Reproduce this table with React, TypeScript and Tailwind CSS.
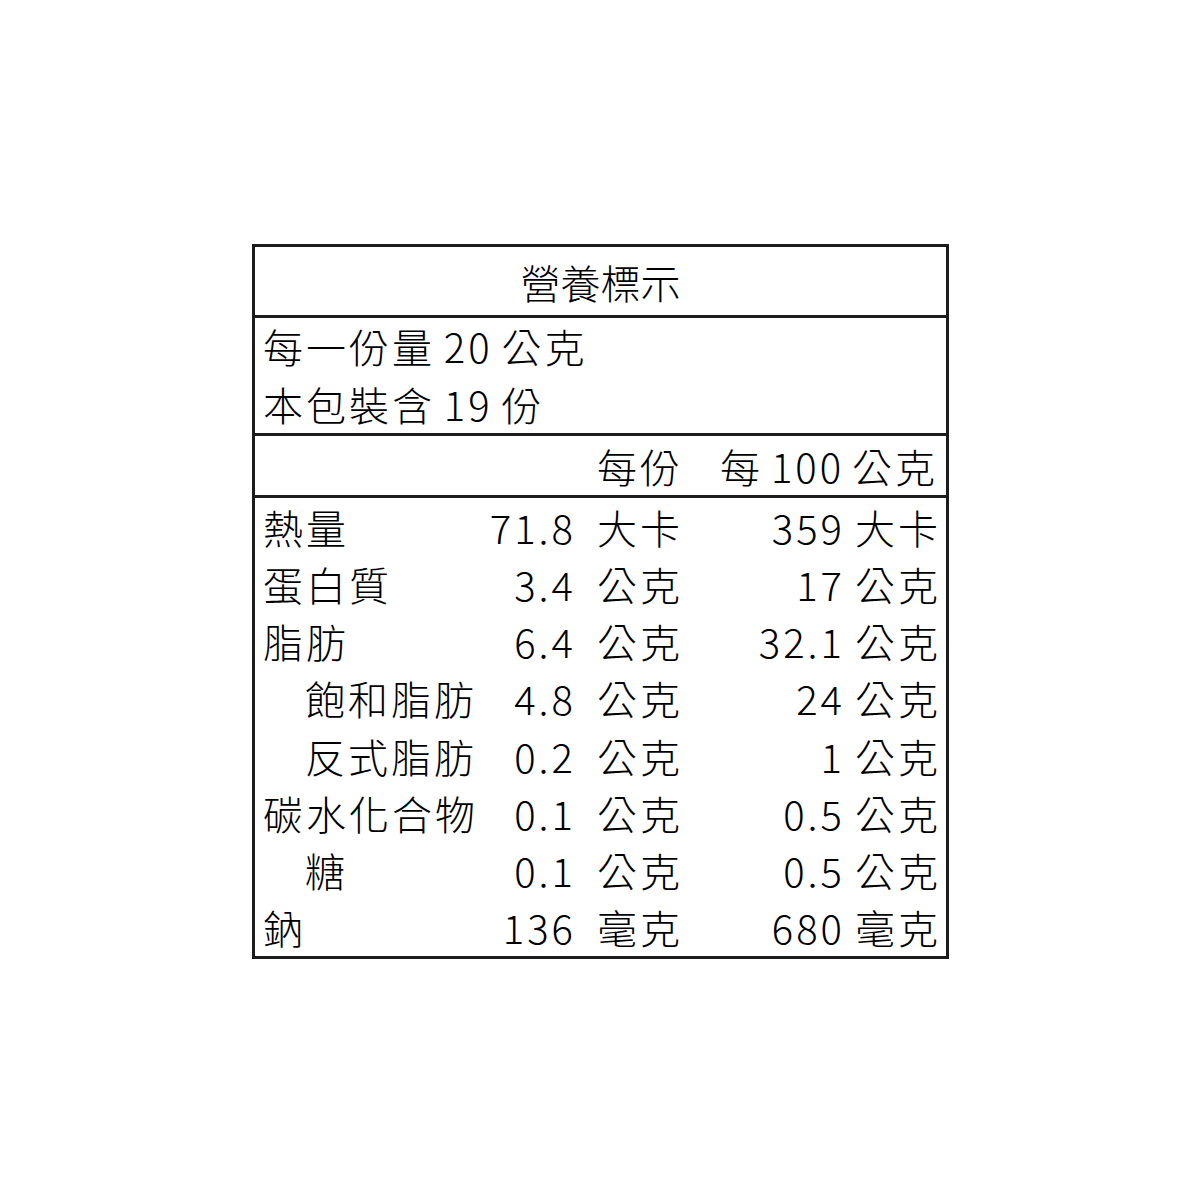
import React from "react";

// Nutrition facts rows
const rows = [
  { label: "熱量", v1: "71.8", u1: "大卡", v2: "359", u2: "大卡" },
  { label: "蛋白質", v1: "3.4", u1: "公克", v2: "17", u2: "公克" },
  { label: "脂肪", v1: "6.4", u1: "公克", v2: "32.1", u2: "公克" },
  { label: "飽和脂肪", v1: "4.8", u1: "公克", v2: "24", u2: "公克", sub: true },
  { label: "反式脂肪", v1: "0.2", u1: "公克", v2: "1", u2: "公克", sub: true },
  { label: "碳水化合物", v1: "0.1", u1: "公克", v2: "0.5", u2: "公克" },
  { label: "糖", v1: "0.1", u1: "公克", v2: "0.5", u2: "公克", sub: true },
  { label: "鈉", v1: "136", u1: "毫克", v2: "680", u2: "毫克" },
];

const NutritionRow = ({ row }: { row: (typeof rows)[number] }) => (
  <div className="flex h-[57.25px] items-center whitespace-nowrap pl-2">
    <div className="flex w-[313px] justify-between">
      <span className={row.sub ? "pl-[42px]" : ""}>{row.label}</span>
      <span>{row.v1}</span>
    </div>
    <div className="ml-[21px] flex w-[248px] justify-between">
      <span>{row.u1}</span>
      <span>{row.v2}</span>
    </div>
    <span className="ml-[10px]">{row.u2}</span>
  </div>
);

export default function App() {
  return (
    <div className="min-h-[1200px] w-[1200px] bg-white pl-[252px] pt-[244px] font-['Noto_Sans_CJK_TC',sans-serif] font-light text-black">
      <div className="w-[697px] border-[3px] border-[#1c1c1c]">
        {/* title */}
        <div className="flex h-[71px] items-center justify-center border-b-[3px] border-[#1c1c1c] pt-[2px] text-[40px]">
          營養標示
        </div>

        {/* serving info */}
        <div className="h-[118px] border-b-[3px] border-[#1c1c1c] pl-2 text-[40px] leading-[57.5px] tracking-[3px] [word-spacing:-3px]">
          <div>每一份量 20 公克</div>
          <div>本包裝含 19 份</div>
        </div>

        {/* column header */}
        <div className="flex h-[62px] items-center whitespace-nowrap border-b-[3px] border-[#1c1c1c] pl-2 pr-[8px] text-[40px] tracking-[3px]">
          <span className="ml-[334px]">每份</span>
          <span className="ml-auto [word-spacing:-4px]">每 100 公克</span>
        </div>

        <div className="text-[40px] tracking-[3px]">
          {rows.map((row) => (
            <NutritionRow key={row.label} row={row} />
          ))}
        </div>
      </div>
    </div>
  );
}
